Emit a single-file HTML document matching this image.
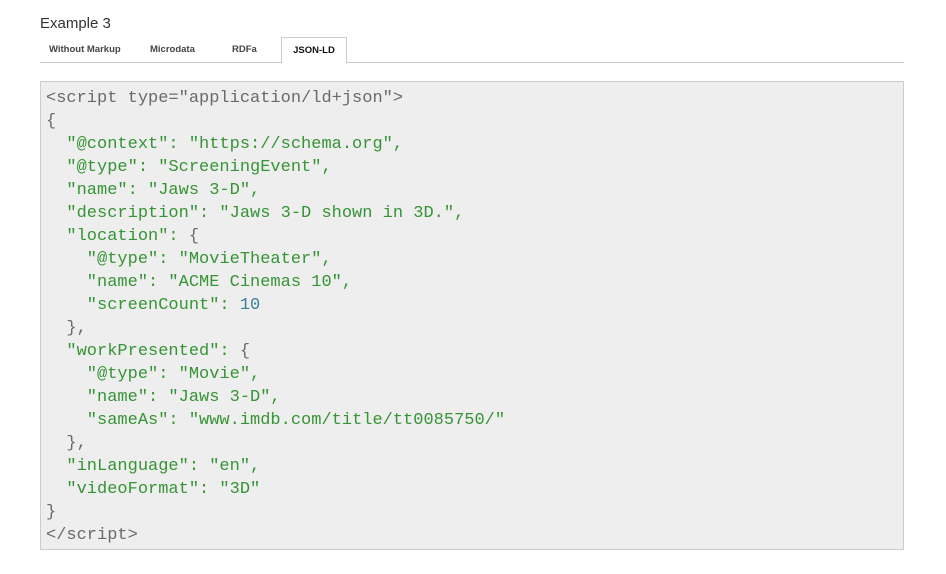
<!DOCTYPE html>
<html><head><style>
body{margin:0;background:#fff;width:946px;height:574px;overflow:hidden;font-family:"Liberation Sans",sans-serif}
.t{position:absolute;left:40px;top:15px;font-size:15px;color:#333}
.tabs{position:absolute;left:40px;top:37px;width:864px;height:25px;border-bottom:1px solid #ccc}
.tab{position:absolute;top:0;height:25px;line-height:25px;font-size:9.5px;font-weight:bold;color:#444}
.act{border:1px solid #ccc;border-bottom:1px solid #fff;background:#fff;left:241px;width:64px;text-align:center;height:25px;color:#111}
pre{position:absolute;left:40px;top:81px;width:864px;height:469px;margin:0;background:#eee;border:1px solid #ccc;box-sizing:border-box;padding:5px 0 0 5px;font-family:"Liberation Mono","Courier New",monospace;font-size:17px;line-height:23px;color:#6a6a6a}
.s{color:#359435}.n{color:#3a7f9a}
</style></head><body>
<div class="t">Example 3</div>
<div class="tabs">
<div class="tab" style="left:9px">Without Markup</div>
<div class="tab" style="left:110px">Microdata</div>
<div class="tab" style="left:192px">RDFa</div>
<div class="tab act">JSON-LD</div>
</div>
<pre>&lt;script type="application/ld+json"&gt;
{
<span class="s">  "@context": "https://schema.org",
  "@type": "ScreeningEvent",
  "name": "Jaws 3-D",
  "description": "Jaws 3-D shown in 3D.",
  "location": </span>{
<span class="s">    "@type": "MovieTheater",
    "name": "ACME Cinemas 10",
    "screenCount": </span><span class="n">10</span>
  },
<span class="s">  "workPresented": </span>{
<span class="s">    "@type": "Movie",
    "name": "Jaws 3-D",
    "sameAs": "www.imdb.com/title/tt0085750/"</span>
  },
<span class="s">  "inLanguage": "en",
  "videoFormat": "3D"</span>
}
&lt;/script&gt;</pre>
</body></html>
